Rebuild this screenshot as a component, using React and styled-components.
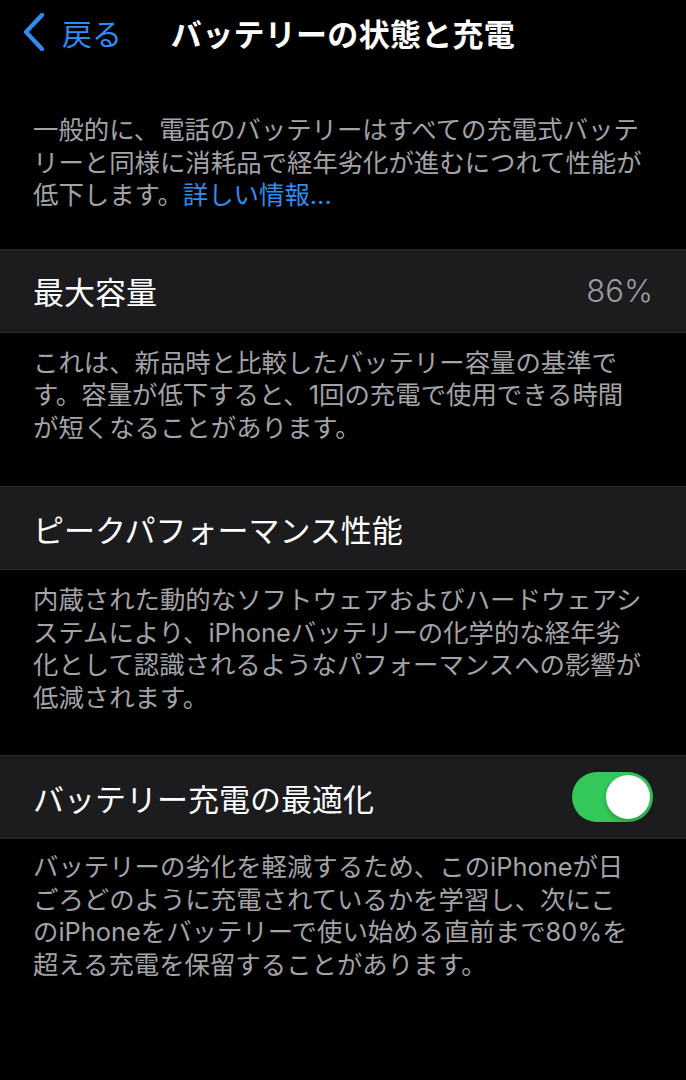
import React from 'react'
import styled, { createGlobalStyle } from 'styled-components'

const GlobalStyle = createGlobalStyle`
	html, body {
		margin: 0;
		padding: 0;
		background: #000;
	}
	body {
		font-family: "Inter", "Noto Sans CJK JP", sans-serif;
		-webkit-font-smoothing: antialiased;
	}
`

const Screen = styled.div`
	width: 686px;
	min-height: 1080px;
	background: #000;
	color: #fff;
`

const NavBar = styled.header`
	height: 70px;
	box-sizing: border-box;
	padding-bottom: 6px;
	display: grid;
	grid-template-columns: 1fr auto 1fr;
	align-items: center;
`

const BackButton = styled.div`
	display: flex;
	align-items: center;
	gap: 16px;
	padding-left: 21px;
	color: #2f8cf0;
	font-size: 30px;
`

const NavTitle = styled.h1`
	margin: 0;
	font-size: 31px;
	font-weight: 700;
	letter-spacing: 0.3px;
	white-space: nowrap;
`

const Note = styled.p`
	margin: 0;
	padding: ${(p) => p.$pad || '14px 33px 42px'};
	font-size: 25.4px;
	line-height: 32.5px;
	color: #a3a3a8;
`

const Line = styled.span`
	display: block;
	white-space: nowrap;
`

const Link = styled.span`
	color: #2f8cf0;
`

const Cell = styled.div`
	height: 84px;
	box-sizing: border-box;
	display: flex;
	align-items: center;
	justify-content: space-between;
	padding: 0 33px;
	background: #1c1c1e;
	border-top: 1px solid #2a2a2c;
	border-bottom: 1px solid #2a2a2c;
`

const CellLabel = styled.span`
	font-size: 31px;
	color: #fff;
`

const CellValue = styled.span`
	font-size: 31px;
	font-weight: 300;
	color: #9c9ca1;
`

const Switch = styled.div`
	width: 81px;
	height: 50px;
	border-radius: 25px;
	background: ${(p) => (p.$on ? '#34c759' : '#39393d')};
	display: flex;
	align-items: center;
	justify-content: ${(p) => (p.$on ? 'flex-end' : 'flex-start')};
	padding: 3px;
	box-sizing: border-box;
`

const Knob = styled.div`
	width: 44px;
	height: 44px;
	border-radius: 50%;
	background: #fff;
	box-shadow: 0 2px 4px rgba(0, 0, 0, 0.25);
`

const Chevron = () => (
	<svg width="25" height="40" viewBox="0 0 25 40">
		<path
			d="M21 3 L5 20 L21 37"
			fill="none"
			stroke="#2f8cf0"
			strokeWidth="4.3"
			strokeLinecap="round"
			strokeLinejoin="round"
		/>
	</svg>
)

const App = () => (
	<Screen>
		<GlobalStyle />
		<NavBar>
			<BackButton>
				<Chevron />
				<span>戻る</span>
			</BackButton>
			<NavTitle>バッテリーの状態と充電</NavTitle>
			<div />
		</NavBar>

		<Note $pad="44px 33px 37px">
			<Line>一般的に、電話のバッテリーはすべての充電式バッテ</Line>
			<Line>リーと同様に消耗品で経年劣化が進むにつれて性能が</Line>
			<Line>
				低下します。<Link>詳しい情報...</Link>
			</Line>
		</Note>

		<Cell>
			<CellLabel>最大容量</CellLabel>
			<CellValue>86%</CellValue>
		</Cell>
		<Note $pad="14px 33px 42px">
			<Line>これは、新品時と比較したバッテリー容量の基準で</Line>
			<Line>す。容量が低下すると、1回の充電で使用できる時間</Line>
			<Line>が短くなることがあります。</Line>
		</Note>

		<Cell>
			<CellLabel>ピークパフォーマンス性能</CellLabel>
		</Cell>
		<Note $pad="14px 33px 41px">
			<Line>内蔵された動的なソフトウェアおよびハードウェアシ</Line>
			<Line>ステムにより、iPhoneバッテリーの化学的な経年劣</Line>
			<Line>化として認識されるようなパフォーマンスへの影響が</Line>
			<Line>低減されます。</Line>
		</Note>

		<Cell>
			<CellLabel>バッテリー充電の最適化</CellLabel>
			<Switch $on>
				<Knob />
			</Switch>
		</Cell>
		<Note $pad="12px 33px 42px">
			<Line>バッテリーの劣化を軽減するため、このiPhoneが日</Line>
			<Line>ごろどのように充電されているかを学習し、次にこ</Line>
			<Line>のiPhoneをバッテリーで使い始める直前まで80%を</Line>
			<Line>超える充電を保留することがあります。</Line>
		</Note>
	</Screen>
)

export default App
